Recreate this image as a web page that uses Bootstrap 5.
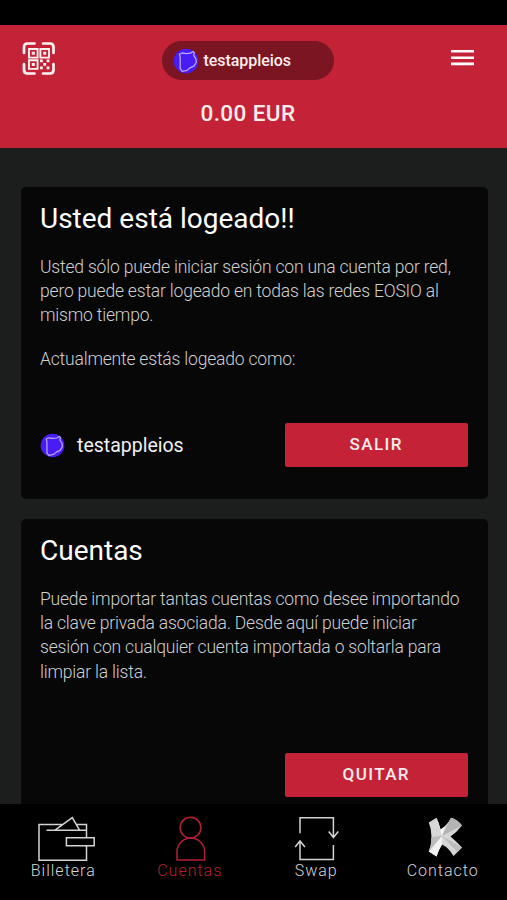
<!DOCTYPE html>
<html lang="es">
<head>
<meta charset="utf-8">
<meta name="viewport" content="width=device-width, initial-scale=1">
<title>Cuentas</title>
<link href="https://cdn.jsdelivr.net/npm/bootstrap@5.3.0/dist/css/bootstrap.min.css" rel="stylesheet">
<style>
body{font-family:Roboto,sans-serif;background:#1c1e1d;color:#fff;height:900px}
.status-strip{height:25px;background:#000}
.wallet-head{height:122.5px;background:#c42337;padding:16px 33px 0 22px}
.acct-pill{width:172px;height:39px;background:#7a1521;color:#ffecec;padding-left:11px;font-size:16px;font-weight:500;letter-spacing:-.05px;gap:5px;margin-right:12px}
.balance{font-size:22.5px;font-weight:500;line-height:27px;letter-spacing:.4px;color:#ffecec;margin:19.5px 0 0 0}
.panel{background:#070707;border-radius:5px;padding:16px 19.5px 32px}
.panel h2{font-size:28px;font-weight:400;line-height:32px;margin:0 0 20px}
.panel p{font-size:17.5px;letter-spacing:-.19px;font-weight:300;line-height:24.4px;color:#d0d0d0;margin-bottom:19.5px}
.acct-name{font-size:19.5px;color:#f0f0f0}
.btn-act{width:183.5px;height:44px;background:#c42337;color:#ffecec;border-radius:2px;font-size:17px;font-weight:500;line-height:42px;letter-spacing:1.4px;border:0;padding:0 0 2px}
.action-row{margin-top:51.5px}
.action-row-end{margin-top:69px}
.cards-area{padding:39px 19.5px 0 20.5px;gap:19.5px}
.tabs-bar{height:96px;background:#000;padding-top:12px}
.tab-link{font-size:16px;font-weight:300;line-height:19px;letter-spacing:1px;color:#d4d4d4;text-decoration:none;width:126.5px}
.tab-link svg{height:45px;display:block}
.tab-on{color:#b3202f}
.stroke-icon{fill:none;stroke:currentColor;stroke-width:1.5}
</style>
</head>
<body class="d-flex flex-column overflow-hidden">
<svg width="0" height="0" class="position-absolute" aria-hidden="true">
<symbol id="avatar" viewBox="0 0 26 26"><circle cx="13" cy="13" r="12.3" fill="#4a1cf5"/><path d="M6.500 6.300 9 5l4.500.6 3.800-.4 2.700-1.600 1.300 1-.6 2.700 2.300 3.600.2 3.600-2.200 3.400-4 2-3 2.400-4.800 1-2-2.600V9.500z" fill="none" stroke="#b9a6ff" stroke-width="1.300" stroke-linejoin="round"/></symbol>
</svg>
<div class="status-strip flex-shrink-0"></div>
<header class="wallet-head flex-shrink-0">
<div class="d-flex justify-content-between">
<svg width="34" height="34" viewBox="0 0 34 34" fill="none" stroke="#fff3f3">
<g stroke-width="2.700" stroke-linecap="round"><path d="M2 12V6q0-3.500 3.500-3.500h7M21 2.500h7q3.500 0 3.500 3.500v6M31.500 23v6q0 3.500-3.500 3.500h-7M12.500 32.500h-7Q2 32.500 2 29v-6"/></g>
<g stroke-width="1.900"><path d="M7 8h8.600v8.600H7zM18.400 8H27v8.600h-8.600zM7 19.300h8.600v8.600H7z"/></g>
<g fill="#fff3f3" stroke="none"><path d="M9.800 10.800h3v3h-3zM21.200 10.800h3v3h-3zM9.800 22.100h3v3h-3zM18 18.500h2.800v2.800H18zM24.600 18.500h2.800v2.800h-2.800zM21.300 22h2.800v2.800h-2.800zM18 25.500h2.800v2.800H18zM24.600 25.500h2.800v2.800h-2.800z"/></g></svg>
<div class="acct-pill rounded-pill d-flex align-items-center"><svg width="26" height="26"><use href="#avatar"/></svg><span>testappleios</span></div>
<svg width="23" height="34" viewBox="0 0 23 34" fill="#fff"><path d="M0 9h23v2.600H0zM0 15.400h23V18H0zM0 21.600h23v2.600H0z"/></svg>
</div>
<div class="balance text-center"><span>0.00 EUR</span></div>
</header>
<main class="cards-area flex-grow-1 overflow-hidden d-flex flex-column">
<section class="panel flex-shrink-0">
<h2>Usted está logeado!!</h2>
<p>Usted sólo puede iniciar sesión con una cuenta por red,<br>pero puede estar logeado en todas las redes EOSIO al<br>mismo tiempo.</p>
<p>Actualmente estás logeado como:</p>
<div class="action-row d-flex justify-content-between align-items-center">
<div class="d-flex align-items-center gap-2"><svg width="25" height="25"><use href="#avatar"/></svg><span class="acct-name ms-1">testappleios</span></div>
<button class="btn btn-act">SALIR</button>
</div>
</section>
<section class="panel flex-shrink-0">
<h2>Cuentas</h2>
<p>Puede importar tantas cuentas como desee importando<br>la clave privada asociada. Desde aquí puede iniciar<br>sesión con cualquier cuenta importada o soltarla para<br>limpiar la lista.</p>
<div class="action-row-end d-flex justify-content-end"><button class="btn btn-act">QUITAR</button></div>
</section>
</main>
<nav class="tabs-bar flex-shrink-0 d-flex">
<a href="#" class="tab-link d-flex flex-column align-items-center"><svg class="stroke-icon" width="64" viewBox="0 0 64 45"><path d="M55.500 21.700V8.500H45.200M32 8.500H8v35.800h47.500V29.700M15.500 14.300h40M23.700 14.300 41.300 1.700l7.400 12.600M35.400 21.700h27.800v8H35.400z"/></svg>Billetera</a>
<a href="#" class="tab-link tab-on d-flex flex-column align-items-center"><svg class="stroke-icon" width="64" viewBox="0 0 64 45"><circle cx="32.500" cy="11.700" r="10.400"/><path d="M19 44V35.500C19 28 25.500 22.100 32.800 22.100S46.600 28 46.600 35.500V44z"/></svg>Cuentas</a>
<a href="#" class="tab-link d-flex flex-column align-items-center"><svg class="stroke-icon" width="64" viewBox="0 0 64 45"><path d="M16 17.300V1.700h33.400V21.500M44.700 15.500l4.700 6 4.900-6M49.400 29v14.500H16V25M11.200 31l4.800-6 4.900 6"/></svg>Swap</a>
<a href="#" class="tab-link d-flex flex-column align-items-center"><svg width="64" viewBox="0 0 64 45">
<path fill="#d6d6d6" d="M17.800 6.500 25.500 1.700Q28 7 29.500 13.500Q36.500 9 40 1.700Q47 4 51 9.500Q46 16 39.500 20.500Q46 26 51 31.500L42.500 40Q38 32 31 28.500Q28 33 25.500 40.500L17.800 35.500Q20.500 29 20.500 21Q20.500 13 17.800 6.500z"/>
<path fill="#f7f7f7" d="M25.500 1.700Q28 7 29.500 13.500L34 10.500 31 20z"/>
<path fill="#f2f2f2" d="M17.800 35.500 31 20 31 28.500Q28 33 25.500 40.500z"/>
<path fill="#b4b4b4" d="M40 1.700Q47 4 51 9.500L31 20z"/>
<path fill="#bcbcbc" d="M31 20 51 31.500 46.500 36zM20.500 21 31 20 17.800 35.500Q20.500 29 20.500 21z"/></svg>Contacto</a>
</nav>
<script src="https://cdn.jsdelivr.net/npm/bootstrap@5.3.0/dist/js/bootstrap.bundle.min.js"></script>
</body>
</html>
